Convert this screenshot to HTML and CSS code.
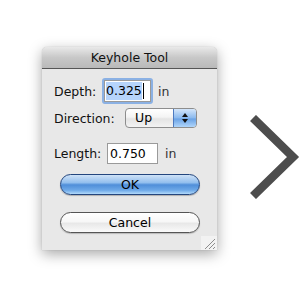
FILE: index.html
```html
<!DOCTYPE html>
<html>
<head>
<meta charset="utf-8">
<link rel="stylesheet" href="styles.css">
</head>
<body>
<div class="page">
  <div class="dialog">
    <div class="titlebar">Keyhole Tool</div>
    <div class="content">
      <div class="row row-depth">
        <span class="label label-depth">Depth:</span>
        <span class="focus"><span class="field"><span class="sel">0.325</span><span class="caret"></span></span></span>
        <span class="unit unit-depth">in</span>
      </div>
      <div class="row row-dir">
        <span class="label label-dir">Direction:</span>
        <span class="popup"><span class="popup-text">Up</span><span class="stepper"><svg width="8" height="12" viewBox="0 0 8 12"><path d="M4 1 L7 5 L1 5 Z" fill="#111"/><path d="M4 11 L7 7 L1 7 Z" fill="#111"/></svg></span></span>
      </div>
      <div class="row row-len">
        <span class="label label-len">Length:</span>
        <span class="field field-len">0.750</span>
        <span class="unit">in</span>
      </div>
      <div class="btn ok">OK</div>
      <div class="btn cancel">Cancel</div>
      <div class="footer">
        <svg class="grip" width="16" height="14" viewBox="0 0 16 14"><rect width="16" height="14" fill="#f2f2f2"/><path d="M4 13 L14 3 M8 13 L14 7 M12 13 L14 11" stroke="#8c8c8c" stroke-width="1"/></svg>
      </div>
    </div>
  </div>
  <svg class="chevron" width="50" height="84" viewBox="0 0 50 84"><path d="M3 3 L43 42 L3 81" fill="none" stroke="#4d4d4d" stroke-width="8.5"/></svg>
</div>
</body>
</html>
```
FILE: styles.css
```css
html, body { margin: 0; padding: 0; background: #fff; }
body { font-family: "DejaVu Sans", "Liberation Sans", sans-serif; font-size: 12.5px; color: #000; }
.page { width: 300px; height: 300px; display: flex; align-items: flex-start; padding: 47px 0 0 42px; box-sizing: border-box; overflow: hidden; }
.dialog { width: 176px; height: 203px; background: #e8e8e8; border-radius: 5px 5px 0 0; box-shadow: 0 4px 14px rgba(0,0,0,0.35), 0 0 1px rgba(0,0,0,0.3); display: flex; flex-direction: column; }
.titlebar { height: 21px; border-bottom: 1px solid #555; border-radius: 5px 5px 0 0; background: linear-gradient(#e9e9e9, #c8c8c8 50%, #b9b9b9); text-align: center; line-height: 21px; font-size: 12.5px; color: #111; }
.content { flex: 1; display: flex; flex-direction: column; padding: 9px 0 0 12px; }
.row { display: flex; align-items: center; }
.label { color: #111; flex: none; }
.label-depth { width: 48px; }
.label-dir { width: 71px; }
.label-len { width: 53px; }
.row-depth { height: 26px; }
.focus { width: 47px; height: 22px; border: 2px solid #8bb1e4; border-radius: 3px; display: flex; }
.field { flex: 1; background: #fff; border: 1px solid #9a9a9a; display: flex; align-items: center; padding-left: 1px; }
.sel { background: #b6d4fb; line-height: 18px; }
.caret { width: 1px; height: 16px; background: #000; margin-left: 1px; }
.unit { margin-left: 7px; color: #333; }
.unit-depth { margin-left: 5px; }
.row-dir { height: 20px; margin-top: 4px; }
.popup { width: 70px; height: 18px; border: 1px solid #8d8d8d; border-radius: 4px; display: flex; background: linear-gradient(#fff, #f4f4f4 45%, #e4e4e4 55%, #f3f3f3); overflow: hidden; }
.popup-text { flex: 1; padding-left: 9px; line-height: 18px; }
.stepper { width: 22px; border-left: 1px solid #4d7ac0; background: linear-gradient(#d4e6fb, #8ab9ee 50%, #6aa2e5 55%, #b0d6fb); display: flex; align-items: center; justify-content: center; }
.row-len { height: 21px; margin-top: 15px; }
.field-len { flex: none; width: 47px; height: 19px; padding-left: 2px; box-sizing: content-box; }
.btn { align-self: flex-start; width: 138px; height: 19px; margin-left: 6px; border-radius: 11px; text-align: center; line-height: 19px; }
.ok { margin-top: 10px; border: 1px solid #24467e; background: linear-gradient(#cfe2f7, #93bfee 40%, #4f8ed9 52%, #6ea9e8 80%, #b2dafb); box-shadow: 0 1px 1px rgba(0,0,0,0.25); }
.cancel { margin-top: 17px; border: 1px solid #555; background: linear-gradient(#fff, #f7f7f7 45%, #e8e8e8 55%, #fafafa); box-shadow: 0 1px 1px rgba(0,0,0,0.2); }
.footer { flex: 1; display: flex; justify-content: flex-end; align-items: flex-end; }
.grip { display: block; }
.chevron { margin: 68px 0 0 33px; flex: none; }
```
